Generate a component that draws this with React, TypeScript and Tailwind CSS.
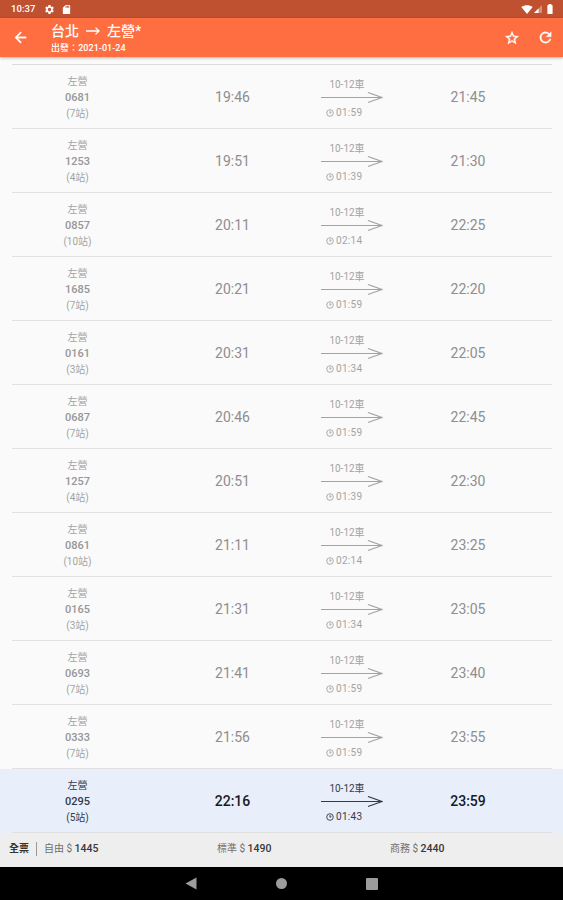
interface Train {
  no: string;
  stops: number;
  depart: string;
  arrive: string;
  duration: string;
}

const trains: Train[] = [
  { no: '0681', stops: 7, depart: '19:46', arrive: '21:45', duration: '01:59' },
  { no: '1253', stops: 4, depart: '19:51', arrive: '21:30', duration: '01:39' },
  { no: '0857', stops: 10, depart: '20:11', arrive: '22:25', duration: '02:14' },
  { no: '1685', stops: 7, depart: '20:21', arrive: '22:20', duration: '01:59' },
  { no: '0161', stops: 3, depart: '20:31', arrive: '22:05', duration: '01:34' },
  { no: '0687', stops: 7, depart: '20:46', arrive: '22:45', duration: '01:59' },
  { no: '1257', stops: 4, depart: '20:51', arrive: '22:30', duration: '01:39' },
  { no: '0861', stops: 10, depart: '21:11', arrive: '23:25', duration: '02:14' },
  { no: '0165', stops: 3, depart: '21:31', arrive: '23:05', duration: '01:34' },
  { no: '0693', stops: 7, depart: '21:41', arrive: '23:40', duration: '01:59' },
  { no: '0333', stops: 7, depart: '21:56', arrive: '23:55', duration: '01:59' },
  { no: '0295', stops: 5, depart: '22:16', arrive: '23:59', duration: '01:43' },
];

const NEXT_TRAIN = '0295';

function StatusBar() {
  return (
    <div className="flex h-[18px] shrink-0 items-center bg-[#bf5130] pl-[11px] pr-[10px] text-white">
      <span className="text-[9.5px] font-medium leading-none tracking-[0.1px]">10:37</span>
      <svg className="ml-[8px] size-[11px]" viewBox="0 0 24 24" fill="currentColor">
        <path d="M19.14 12.94c.04-.3.06-.61.06-.94 0-.32-.02-.64-.07-.94l2.03-1.58a.49.49 0 0 0 .12-.61l-1.92-3.32a.49.49 0 0 0-.59-.22l-2.39.96c-.5-.38-1.03-.7-1.62-.94l-.36-2.54a.48.48 0 0 0-.48-.41h-3.84c-.24 0-.43.17-.47.41l-.36 2.54c-.59.24-1.13.57-1.62.94l-2.39-.96a.48.48 0 0 0-.59.22L2.74 8.87c-.12.21-.08.47.12.61l2.03 1.58c-.05.3-.09.63-.09.94s.02.64.07.94l-2.03 1.58a.49.49 0 0 0-.12.61l1.92 3.32c.12.22.37.29.59.22l2.39-.96c.5.38 1.03.7 1.62.94l.36 2.54c.05.24.24.41.48.41h3.84c.24 0 .44-.17.47-.41l.36-2.54c.59-.24 1.13-.56 1.62-.94l2.39.96c.22.08.47 0 .59-.22l1.92-3.32a.48.48 0 0 0-.12-.61l-2.01-1.58zM12 15.6A3.61 3.61 0 0 1 8.4 12c0-1.98 1.62-3.6 3.6-3.6s3.6 1.62 3.6 3.6-1.62 3.6-3.6 3.6z" />
      </svg>
      <svg className="ml-[6px] size-[11px]" viewBox="0 0 24 24" fill="currentColor">
        <path d="M18 2h-8L4 8v12c0 1.1.9 2 2 2h12c1.1 0 2-.9 2-2V4c0-1.1-.9-2-2-2zm-6 6h-2V4h2v4zm3 0h-2V4h2v4zm3 0h-2V4h2v4z" />
      </svg>
      <svg className="ml-auto h-[9px] w-[12px]" viewBox="0 0 12 9" fill="currentColor">
        <path d="M6 9 .3 2.1C3.6-.5 8.4-.5 11.7 2.1z" />
      </svg>
      <svg className="ml-[1px] size-[8px]" viewBox="0 0 8 8" fill="currentColor">
        <path d="M0 8 8 0v8z" opacity=".35" />
        <path d="M0 8 4.5 3.5V8z" />
      </svg>
      <svg className="ml-[5px] h-[10px] w-[6px]" viewBox="0 0 6 10" fill="currentColor">
        <path d="M1.6 0h2.8v1H5a.6.6 0 0 1 .6.6v7.8a.6.6 0 0 1-.6.6H1a.6.6 0 0 1-.6-.6V1.6A.6.6 0 0 1 1 1h.6z" />
      </svg>
    </div>
  );
}

function AppBar() {
  return (
    <header className="relative z-10 flex h-[39px] shrink-0 items-center bg-[#ff6e40] pl-[12px] pr-[9px] text-white shadow-[0_1px_3px_rgba(0,0,0,0.3)]">
      <svg className="size-[17px]" viewBox="0 0 24 24" fill="currentColor" stroke="currentColor" strokeWidth=".5">
        <path d="M20 11H7.83l5.59-5.59L12 4l-8 8 8 8 1.41-1.41L7.83 13H20v-2z" />
      </svg>
      <div className="ml-[22px] pt-px">
        <h1 className="flex h-[18px] items-center text-[14px] font-medium leading-[18px]">
          <span>台北</span>
          <svg className="mx-[7px] h-[8px] w-[14px]" viewBox="0 0 14 8" fill="none" stroke="currentColor" strokeWidth="1.3">
            <path d="M0 4h13M9.5.6 13 4 9.5 7.4" />
          </svg>
          <span>左營*</span>
        </h1>
        <p className="mt-px h-[13px] text-[9px] font-medium leading-[14px] tracking-[0.05px]">出發：2021-01-24</p>
      </div>
      <svg className="ml-auto size-[16px]" viewBox="0 0 24 24" fill="currentColor" stroke="currentColor" strokeWidth=".6">
        <path d="m22 9.24-7.19-.62L12 2 9.19 8.63 2 9.24l5.46 4.73L5.82 21 12 17.27 18.18 21l-1.63-7.03L22 9.24zM12 15.4l-3.76 2.27 1-4.28-3.32-2.88 4.38-.38L12 6.1l1.71 4.04 4.38.38-3.32 2.88 1 4.28L12 15.4z" />
      </svg>
      <svg className="ml-[17px] size-[17px]" viewBox="0 0 24 24" fill="currentColor" stroke="currentColor" strokeWidth=".5">
        <path d="M17.65 6.35A7.958 7.958 0 0 0 12 4c-4.42 0-7.99 3.58-7.99 8s3.57 8 7.99 8c3.73 0 6.84-2.55 7.73-6h-2.08A5.99 5.99 0 0 1 12 18c-3.31 0-6-2.69-6-6s2.69-6 6-6c1.66 0 3.14.69 4.22 1.78L13 11h7V4l-2.35 2.35z" />
      </svg>
    </header>
  );
}

function TrainRow({ train }: { train: Train }) {
  const next = train.no === NEXT_TRAIN;

  return (
    <li className={`h-16 ${next ? 'bg-[#e8effb] text-[#343a48]' : 'text-[#a3a3a3]'}`}>
      <div className="ml-[12px] mr-[11px] flex h-full items-center border-b border-[#e1e1e1] pt-[2px]">
        <div className="-ml-[12px] w-[155px] text-center text-[10px] leading-4">
          <div>左營</div>
          <div className={`text-[11px] font-medium ${next ? '' : 'text-[#969696]'}`}>{train.no}</div>
          <div>({train.stops}站)</div>
        </div>
        <div className={`w-[155px] text-center text-[14px] ${next ? 'font-medium text-[#161a24]' : 'text-[#8e8e8e]'}`}>{train.depart}</div>
        <div className="w-[80px] pl-[11px] pt-[3px] text-[10px] leading-[14px]">
          <div className="w-[52px] text-center">10-12車</div>
          <svg className="h-[14px] w-[62px]" viewBox="0 0 62 14" fill="none" stroke="currentColor" strokeWidth="1.2">
            <path d="M0 5.5h61M47 .5l14 5-14 5" />
          </svg>
          <div className="flex items-center pl-[5px]">
            <svg className="mr-[2px] size-[8px]" viewBox="0 0 8 8" fill="none" stroke="currentColor" strokeWidth=".9">
              <circle cx="4" cy="4" r="3.3" />
              <path d="M4 4.5V2M4 4.3l1.500-1" />
            </svg>
            <span className="tracking-[0.3px]">{train.duration}</span>
          </div>
        </div>
        <div className={`w-[156px] text-center text-[14px] ${next ? 'font-medium text-[#161a24]' : 'text-[#8e8e8e]'}`}>{train.arrive}</div>
      </div>
    </li>
  );
}

function Fare({ label, price }: { label: string; price: number }) {
  return (
    <div className="w-[173px] text-[#707070]">
      {label} $ <span className="text-[10.5px] font-medium text-[#383838]">{price}</span>
    </div>
  );
}

function FareBar() {
  return (
    <footer className="flex h-[34px] shrink-0 items-center bg-[#eeeeee] pb-[3px] pl-[9px] text-[10px]">
      <span className="w-[27px] font-bold text-[#333]">全票</span>
      <span className="mr-[7px] h-[14px] w-px bg-[#999]" />
      <Fare label="自由" price={1445} />
      <Fare label="標準" price={1490} />
      <Fare label="商務" price={2440} />
    </footer>
  );
}

function NavBar() {
  return (
    <nav className="flex h-[33px] shrink-0 items-center bg-black pl-[185px] text-[#9c9c9c]">
      <svg className="h-[13px] w-[12px]" viewBox="0 0 12 13" fill="currentColor">
        <path d="M11.5.5v12L.5 6.5z" />
      </svg>
      <span className="ml-[79px] size-[11px] rounded-full bg-[#9c9c9c]" />
      <span className="ml-[79px] size-[12px] rounded-[1px] bg-[#9c9c9c]" />
    </nav>
  );
}

export default function App() {
  return (
    <div className="flex h-[900px] w-[563px] flex-col overflow-hidden bg-[#fafafa] font-[Roboto,'Noto_Sans_CJK_TC',sans-serif]">
      <StatusBar />
      <AppBar />
      <main className="flex-1 pt-[7px]">
        <div className="ml-[12px] mr-[11px] h-px bg-[#dcdcdc]" />
        <ul>
          {trains.map((train) => (
            <TrainRow key={train.no} train={train} />
          ))}
        </ul>
      </main>
      <FareBar />
      <NavBar />
    </div>
  );
}
